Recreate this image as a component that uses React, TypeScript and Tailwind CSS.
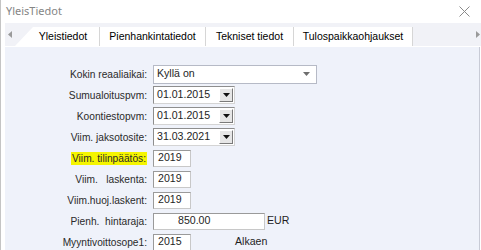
import React from "react";

const tabs = [
  { label: "Pienhankintatiedot", w: "w-[106px]" },
  { label: "Tekniset tiedot", w: "w-[88px]" },
  { label: "Tulospaikkaohjaukset", w: "w-[119px]" },
];

function Label({ text, highlight = false }: { text: string; highlight?: boolean }) {
  return (
    <div className="flex w-[142px] shrink-0 justify-end">
      <span
        className={`whitespace-pre text-[10.2px] leading-[13px] text-[#2a2a2a] ${highlight ? "bg-[#f5f500] px-[1px]" : ""}`}
      >
        {text}
      </span>
    </div>
  );
}

function DateBox({ value }: { value: string }) {
  return (
    <div className="flex h-[18px] w-[82px] items-center border border-t-[#8e8e8e] border-l-[#8e8e8e] border-r-[#d4d4d4] border-b-[#d4d4d4] bg-white">
      <span className="flex-1 pl-[3px] text-[10.6px]">{value}</span>
      <div className="mr-[1px] flex h-[14px] w-[14px] items-center justify-center border border-t-white border-l-white border-r-[#7a7a7a] border-b-[#7a7a7a] bg-[#e6e6e6]">
        <svg width="7" height="4" viewBox="0 0 7 4" aria-hidden>
          <path d="M0 0h7L3.5 4z" fill="#111" />
        </svg>
      </div>
    </div>
  );
}

function TextBox({ value, className = "w-[38px]", inner = "pl-[4px]" }: { value: string; className?: string; inner?: string }) {
  return (
    <div
      className={`flex h-[17px] items-center border border-t-[#9a9a9a] border-l-[#9a9a9a] border-r-[#c8c8c8] border-b-[#c8c8c8] bg-white ${className}`}
    >
      <span className={`text-[10.6px] ${inner}`}>{value}</span>
    </div>
  );
}

function Row({ children }: { children: React.ReactNode }) {
  return <div className="flex h-[18px] items-center gap-[6px]">{children}</div>;
}

export default function App() {
  return (
    <div
      className="relative h-[250px] w-[481px] overflow-hidden border-l border-[#c4c4c4] bg-white text-[10.5px] text-[#1e1e1e]"
      style={{ fontFamily: '"Liberation Sans", Arial, sans-serif' }}
    >
      {/* title bar */}
      <div className="flex h-[23px] items-center justify-between pl-[5px] pr-[11px]">
        <span
          className="text-[11px] text-[#858585]"
          style={{ fontFamily: '"Noto Sans", "Open Sans", sans-serif' }}
        >
          YleisTiedot
        </span>
        <svg width="11" height="11" viewBox="0 0 11 11" aria-hidden>
          <path d="M0.5 0.5l10 10M10.5 0.5l-10 10" stroke="#8a8a8a" strokeWidth="1" />
        </svg>
      </div>

      {/* tab strip */}
      <div className="ml-[4px] flex h-[23px] items-end bg-[#f1f2f7]">
        <div className="flex h-full w-[10px] items-center justify-center">
          <svg width="4" height="7" viewBox="0 0 4 7" aria-hidden>
            <path d="M4 0v7L0 3.5z" fill="#9a9a9a" />
          </svg>
        </div>
        <div className="flex h-[19px] w-[84px] items-center justify-center bg-white pl-[12px] [clip-path:polygon(18px_0,100%_0,100%_100%,0_100%)]">
          <span className="text-[10.5px] text-black">Yleistiedot</span>
        </div>
        {tabs.map((t) => (
          <div
            key={t.label}
            className={`flex h-[19px] items-center justify-center border-l border-[#d6d6d6] bg-white ${t.w}`}
          >
            <span className="text-[10.5px] text-black">{t.label}</span>
          </div>
        ))}
        <div className="h-[19px] border-l border-[#d6d6d6]" />
        <div className="flex h-full flex-1 items-center justify-end pr-[1px]">
          <svg width="4" height="7" viewBox="0 0 4 7" aria-hidden>
            <path d="M0 0v7l4-3.5z" fill="#9a9a9a" />
          </svg>
        </div>
      </div>

      {/* panel */}
      <div className="ml-[4px] mr-[1px] mt-[1px] flex h-[205px] flex-col gap-[3px] border-r border-[#c8cbd6] bg-[#eff2fa] pt-[18px]">
        <Row>
          <Label text="Kokin reaaliaikai:" />
          <div className="flex h-[19px] w-[164px] items-center justify-between border border-[#b6bac6] bg-white pl-[3px] pr-[6px]">
            <span className="text-[10.6px]">Kyllä on</span>
            <svg width="7" height="4" viewBox="0 0 7 4" aria-hidden>
              <path d="M0 0h7L3.5 4z" fill="#6e6e6e" />
            </svg>
          </div>
        </Row>
        <Row>
          <Label text="Sumualoituspvm:" />
          <DateBox value="01.01.2015" />
        </Row>
        <Row>
          <Label text="Koontiestopvm:" />
          <DateBox value="01.01.2015" />
        </Row>
        <Row>
          <Label text="Viim. jaksotosite:" />
          <DateBox value="31.03.2021" />
        </Row>
        <Row>
          <Label text="Viim. tilinpäätös:" highlight />
          <TextBox value="2019" />
        </Row>
        <Row>
          <Label text="Viim.   laskenta:" />
          <TextBox value="2019" />
        </Row>
        <Row>
          <Label text="Viim.huoj.laskent:" />
          <TextBox value="2019" />
        </Row>
        <Row>
          <Label text="Pienh.  hintaraja:" />
          <TextBox value="850.00" className="w-[112px]" inner="pl-[24px]" />
          <span className="-ml-[4px] text-[10.6px]">EUR</span>
        </Row>
        <Row>
          <Label text="Myyntivoittosope1:" />
          <TextBox value="2015" />
          <span className="ml-[38px] text-[10.6px]">Alkaen</span>
        </Row>
      </div>
    </div>
  );
}
